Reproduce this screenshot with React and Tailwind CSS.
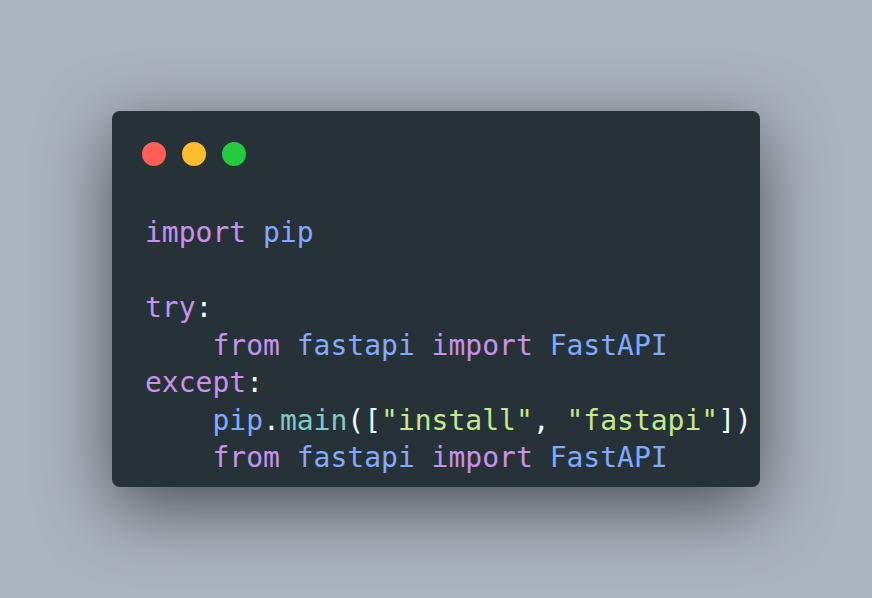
import React from "react";

const K = "text-[#c792ea]";
const V = "text-[#82aaff]";
const P = "text-[#eeffff]";
const S = "text-[#c3e88d]";
const M = "text-[#80cbc4]";

const lines = [
  [["import", K], [" "], ["pip", V]],
  [],
  [["try", K], [":", P]],
  [["    "], ["from", K], [" "], ["fastapi", V], [" "], ["import", K], [" "], ["FastAPI", V]],
  [["except", K], [":", P]],
  [
    ["    "],
    ["pip", V],
    [".", P],
    ["main", M],
    ["([", P],
    ['"install"', S],
    [", ", P],
    ['"fastapi"', S],
    ["])", P],
  ],
  [["    "], ["from", K], [" "], ["fastapi", V], [" "], ["import", K], [" "], ["FastAPI", V]],
];

export default function App() {
  return (
    <div className="w-full h-[598px] bg-[#a9b3be] flex items-center justify-center">
      <div className="w-[648px] h-[376px] bg-[#263238] rounded-lg shadow-[0_20px_68px_rgba(0,0,0,0.55)] pt-[31px] pl-[33px]">
        {/* window buttons */}
        <div className="flex gap-4 ml-[-3px]">
          <span className="w-6 h-6 rounded-full bg-[#ff5f56]" />
          <span className="w-6 h-6 rounded-full bg-[#ffbd2e]" />
          <span className="w-6 h-6 rounded-full bg-[#27c93f]" />
        </div>

        {/* code */}
        <pre className="mt-[48px] font-['DejaVu_Sans_Mono',monospace] text-[28px] leading-[37.5px] text-[#eeffff]">
          {lines.map((line, i) => (
            <div key={i} className="h-[37.5px]">
              {line.map(([t, c], j) => (
                <span key={j} className={c}>
                  {t}
                </span>
              ))}
            </div>
          ))}
        </pre>
      </div>
    </div>
  );
}
